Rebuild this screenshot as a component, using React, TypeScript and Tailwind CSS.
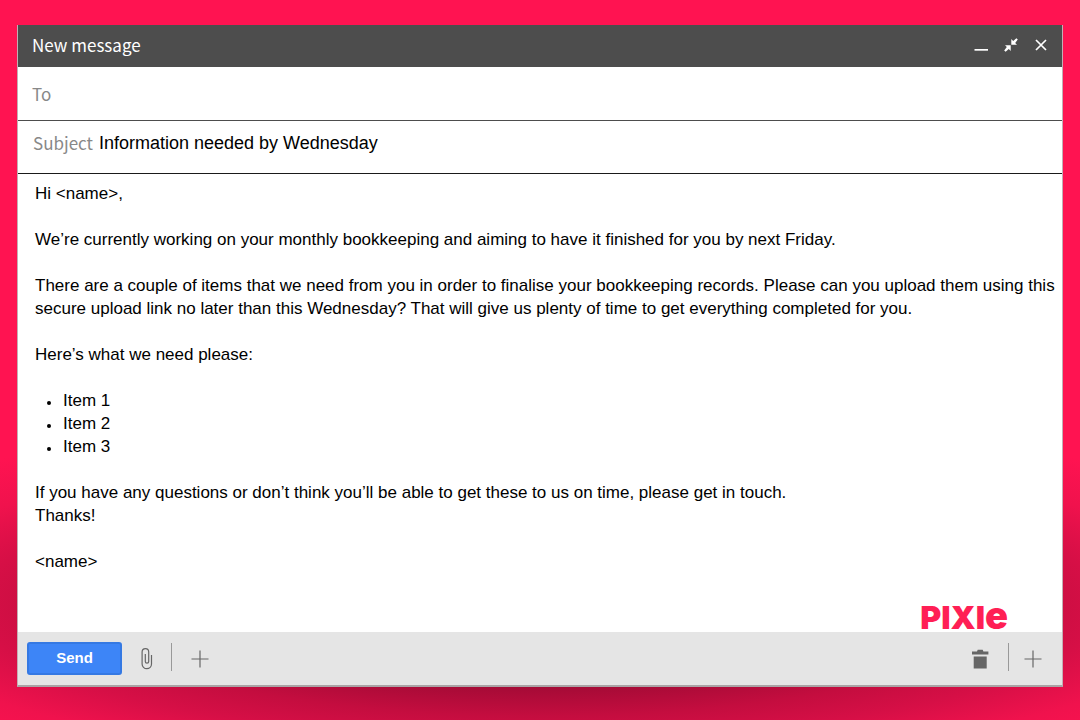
import type { ReactNode } from "react";

const items = ["Item 1", "Item 2", "Item 3"];

function IconButton({ label, children }: { label: string; children: ReactNode }) {
  return (
    <button type="button" aria-label={label} className="flex h-6 w-6 items-center justify-center">
      {children}
    </button>
  );
}

function PlusIcon() {
  return (
    <svg width="18" height="18" viewBox="0 0 18 18" fill="none" stroke="#666" strokeWidth="1.2">
      <path d="M9 0.500v17M0.500 9h17" />
    </svg>
  );
}

export default function App() {
  return (
    <main className="min-h-screen bg-[#ff1351] bg-[radial-gradient(ellipse_58%_150px_at_50%_605px,#7d0828_0%,#9a0a33_48%,#c40d3f_74%,#d60f46_90%,#f0124d_108%,#ff1351_130%)] px-[17px] pt-[25px] pb-8 font-['Liberation_Sans',Arial,sans-serif] text-black">
      <form className="flex min-h-[662px] flex-col border-x border-b-2 border-x-[#c4aeb4] border-b-[#aaa3a5] bg-white" onSubmit={(e) => e.preventDefault()}>
        {/* Title bar */}
        <header className="flex h-[42px] items-center justify-between bg-[#4d4d4d] pr-[9px] pb-[3px] pl-3.5 text-white">
          <h1 className="font-['Noto_Sans_CJK_SC',sans-serif] text-[17px] leading-6">New message</h1>
          <div className="flex items-center gap-1.5">
            <IconButton label="Minimise">
              <svg width="14" height="14" viewBox="0 0 14 14">
                <path d="M0.500 11h13.500v1.700H0.500z" fill="#fff" />
              </svg>
            </IconButton>
            <IconButton label="Exit full screen">
              <svg width="14" height="14" viewBox="0 0 14 14" fill="#fff">
                <path d="M7.300 1v5.700H13l-1.800-1.800 2.600-3.400L12.400.2 9.200 2.900zM6.700 13V7.300H1l1.800 1.800-2.600 3.400 1.400 1.300 3.200-2.700z" />
              </svg>
            </IconButton>
            <IconButton label="Close">
              <svg width="12" height="12" viewBox="0 0 12 12" stroke="#fff" strokeWidth="1.7">
                <path d="M1 1l10 10M11 1L1 11" />
              </svg>
            </IconButton>
          </div>
        </header>

        {/* Recipient and subject */}
        <div className="flex h-[54px] items-center gap-2 border-b border-[#4d4d4d] px-3.5">
          <label htmlFor="to" className="font-['Noto_Sans_CJK_SC',sans-serif] text-[17px] leading-6 text-[#888]">To</label>
          <input id="to" type="text" className="min-w-0 flex-1 text-lg leading-6 outline-none" />
        </div>
        <div className="flex h-[53px] items-center gap-1.5 border-b border-[#1a1a1a] px-[15px] pb-2">
          <label htmlFor="subject" className="font-['Noto_Sans_CJK_SC',sans-serif] text-[17px] leading-6 text-[#888]">Subject</label>
          <input
            id="subject"
            type="text"
            defaultValue="Information needed by Wednesday"
            className="min-w-0 flex-1 text-lg leading-6 outline-none"
          />
        </div>

        {/* Message body */}
        <div className="flex-1 space-y-[23px] pt-2 pr-1 pl-[17px] text-[17px] leading-[23px]">
          <p>Hi &lt;name&gt;,</p>
          <p>We’re currently working on your monthly bookkeeping and aiming to have it finished for you by next Friday.</p>
          <p>
            There are a couple of items that we need from you in order to finalise your bookkeeping records. Please can you upload them using this secure upload link no later than this Wednesday? That will give us plenty of time to get everything completed for you.
          </p>
          <p>Here’s what we need please:</p>
          <ul>
            {items.map((item) => (
              <li key={item} className="flex items-center gap-3 pl-3">
                <span className="mt-1 h-1 w-1 rounded-full bg-black" />
                {item}
              </li>
            ))}
          </ul>
          <p>
            If you have any questions or don’t think you’ll be able to get these to us on time, please get in touch.
            <br />
            Thanks!
          </p>
          <p>&lt;name&gt;</p>
        </div>

        {/* Brand mark */}
        <div className="flex items-baseline justify-end pr-[54px] font-['Inter',sans-serif] text-[32px] leading-7 font-black text-[#ff1f55]">
          PIXI<span className="text-[38px] leading-7">e</span>
        </div>

        {/* Toolbar */}
        <footer className="flex h-[53px] items-center justify-between bg-[#e5e5e5] pr-[17px] pl-[9px]">
          <div className="flex items-center">
            <button
              type="submit"
              className="h-[33px] w-[95px] rounded-[3px] border-2 border-[#3579e3] bg-[#3d85f7] text-[15px] font-bold text-white"
            >
              Send
            </button>
            <div className="flex items-center pl-[13px]">
              <IconButton label="Attach file">
                <svg width="12" height="22" viewBox="0 0 12 22" fill="none" stroke="#666" strokeWidth="1.2">
                  <path d="M10.500 7v9a4.700 4.700 0 0 1-9.400 0V4a3.300 3.300 0 0 1 6.600 0v9.500a1.700 1.700 0 0 1-3.400 0V6" />
                </svg>
              </IconButton>
              <span className="mr-4 mb-1 ml-3 h-7 w-px bg-[#999]" />
              <IconButton label="More formatting">
                <PlusIcon />
              </IconButton>
            </div>
          </div>
          <div className="flex items-center">
            <IconButton label="Discard draft">
              <svg width="18" height="20" viewBox="0 0 18 20" fill="#666">
                <path d="M1 2.500h5L6.700.8h5L12.400 2.500h5v3H1zM2.700 7.500h13v12h-13z" />
              </svg>
            </IconButton>
            <span className="mr-3 mb-1 ml-4 h-7 w-px bg-[#999]" />
            <IconButton label="More options">
              <PlusIcon />
            </IconButton>
          </div>
        </footer>
      </form>
    </main>
  );
}
